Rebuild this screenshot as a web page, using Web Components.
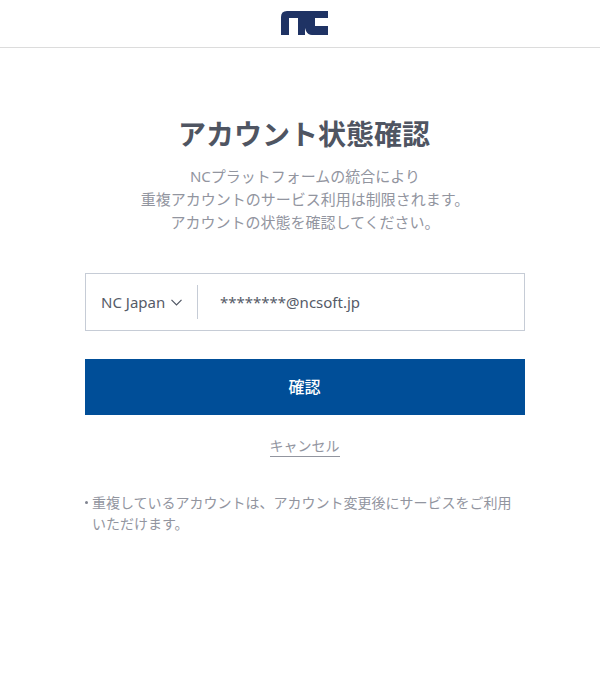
<!DOCTYPE html>
<html lang="ja">
<head>
<meta charset="utf-8">
<title>アカウント状態確認</title>
<style>
  html, body { margin: 0; padding: 0; background: #fff; }
  body { font-family: "Noto Sans", "Noto Sans CJK JP", sans-serif; }
</style>
</head>
<body>
<nc-header></nc-header>
<nc-main>
  <nc-intro title-text="アカウント状態確認">
    NCプラットフォームの統合により<br>重複アカウントのサービス利用は制限されます。<br>アカウントの状態を確認してください。
  </nc-intro>
  <nc-account region="NC Japan" email="********@ncsoft.jp"></nc-account>
  <nc-button>確認</nc-button>
  <nc-cancel>キャンセル</nc-cancel>
  <nc-note>重複しているアカウントは、アカウント変更後にサービスをご利用いただけます。</nc-note>
</nc-main>

<script>
  class NcHeader extends HTMLElement {
    connectedCallback() {
      const shadowRoot = this.attachShadow({ mode: "open" });
      shadowRoot.innerHTML = `
        <style>
          :host { display: flex; justify-content: center; align-items: flex-start; box-sizing: border-box; height: 48px; padding-left: 9px; border-bottom: 1px solid #dcdcdc; }
          svg { display: block; width: 47px; height: 24px; margin-top: 11px; }
        </style>
        <svg viewBox="0 0 47 24" aria-label="NC">
          <path fill="#1f3364" d="M6 0H47V7H34V15H47V24H31Q27 24 25 20L24 17V24H17V7H8V24H0V6Q0 0 6 0Z"/>
        </svg>
      `;
    }
  }

  class NcMain extends HTMLElement {
    connectedCallback() {
      const shadowRoot = this.attachShadow({ mode: "open" });
      shadowRoot.innerHTML = `
        <style>
          :host { display: flex; flex-direction: column; padding: 0 75px 0 85px; }
        </style>
        <slot></slot>
      `;
    }
  }

  class NcIntro extends HTMLElement {
    connectedCallback() {
      const shadowRoot = this.attachShadow({ mode: "open" });
      shadowRoot.innerHTML = `
        <style>
          :host { display: block; text-align: center; padding-top: 65px; }
          h1 { margin: 0; padding-right: 2px; font-size: 28px; line-height: 42px; font-weight: 700; color: #4f5562; }
          p { margin: 9.5px 0 0; font-size: 15px; line-height: 23px; color: #92959f; }
        </style>
        <h1>${this.getAttribute("title-text")}</h1>
        <p><slot></slot></p>
      `;
    }
  }

  class NcAccount extends HTMLElement {
    connectedCallback() {
      const shadowRoot = this.attachShadow({ mode: "open" });
      shadowRoot.innerHTML = `
        <style>
          :host { display: flex; align-items: center; box-sizing: border-box; height: 58px; margin-top: 39.5px; border: 1px solid #c6ccd6; color: #565b68; }
          .region { display: flex; align-items: center; gap: 6px; box-sizing: border-box; width: 112px; height: 34px; padding-left: 15px; border-right: 1px solid #c6ccd6; font-size: 15px; }
          svg { width: 11px; height: 7px; }
          .email { padding-left: 22px; font-size: 15px; }
        </style>
        <div class="region">
          <span>${this.getAttribute("region")}</span>
          <svg viewBox="0 0 11 7"><path d="M.5.8 5.5 5.8 10.5.8" fill="none" stroke="#4f5562" stroke-width="1.2"/></svg>
        </div>
        <div class="email">${this.getAttribute("email")}</div>
      `;
    }
  }

  class NcButton extends HTMLElement {
    connectedCallback() {
      const shadowRoot = this.attachShadow({ mode: "open" });
      shadowRoot.innerHTML = `
        <style>
          :host { display: flex; justify-content: center; align-items: center; box-sizing: border-box; height: 56px; padding: 0 1px 2px 0; margin-top: 28px; background: #004e98; color: #fff; font-size: 16px; font-weight: 500; }
        </style>
        <slot></slot>
      `;
    }
  }

  class NcCancel extends HTMLElement {
    connectedCallback() {
      const shadowRoot = this.attachShadow({ mode: "open" });
      shadowRoot.innerHTML = `
        <style>
          :host { display: block; text-align: center; margin-top: 20px; padding-right: 1px; font-size: 14px; line-height: 21px; color: #92959f; }
          span { display: inline-block; border-bottom: 1px solid #92959f; }
        </style>
        <span><slot></slot></span>
      `;
    }
  }

  class NcNote extends HTMLElement {
    connectedCallback() {
      const shadowRoot = this.attachShadow({ mode: "open" });
      shadowRoot.innerHTML = `
        <style>
          :host { display: block; position: relative; margin-top: 35px; padding: 0 6px 0 7px; font-size: 14px; line-height: 21px; color: #92959f; }
          :host::before { content: ""; position: absolute; left: 0; top: 9px; width: 3px; height: 3px; border-radius: 50%; background: #7f838f; }
        </style>
        <slot></slot>
      `;
    }
  }

  window.customElements.define("nc-header", NcHeader);
  window.customElements.define("nc-main", NcMain);
  window.customElements.define("nc-intro", NcIntro);
  window.customElements.define("nc-account", NcAccount);
  window.customElements.define("nc-button", NcButton);
  window.customElements.define("nc-cancel", NcCancel);
  window.customElements.define("nc-note", NcNote);
</script>
</body>
</html>
